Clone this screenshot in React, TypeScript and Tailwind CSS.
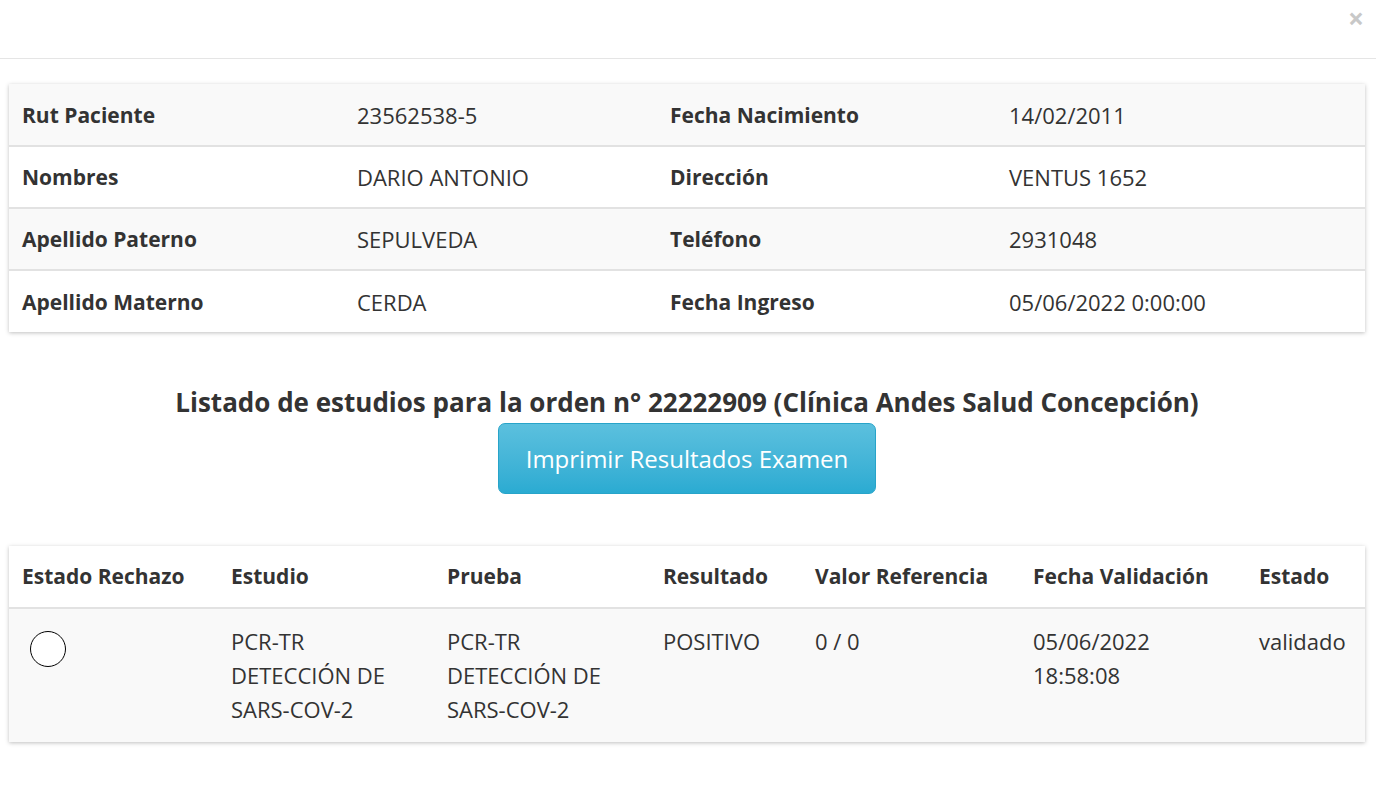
import React from 'react';

const patient: [string, string, string, string][] = [
  ['Rut Paciente', '23562538-5', 'Fecha Nacimiento', '14/02/2011'],
  ['Nombres', 'DARIO ANTONIO', 'Dirección', 'VENTUS 1652'],
  ['Apellido Paterno', 'SEPULVEDA', 'Teléfono', '2931048'],
  ['Apellido Materno', 'CERDA', 'Fecha Ingreso', '05/06/2022 0:00:00'],
];

const headers = ['Estado Rechazo', 'Estudio', 'Prueba', 'Resultado', 'Valor Referencia', 'Fecha Validación', 'Estado'];

export default function App() {
  return (
    <div className="min-h-screen bg-white text-[#333] font-['Open_Sans','Noto_Sans',sans-serif]">
      {/* modal header */}
      <div className="h-[59px] border-b border-[#e5e5e5] flex justify-end items-start pr-[12px] pt-[3px]">
        <button className="text-[28px] leading-[30px] font-bold text-[#c8c8c8]">×</button>
      </div>

      <div className="pl-[9px] pr-[11px] pt-[25px]">
        {/* patient data */}
        <div className="shadow-[0_1px_4px_rgba(0,0,0,0.25)]">
          <table className="w-full table-fixed text-[22px] leading-[30px]">
            <colgroup>
              <col className="w-[336px]" />
              <col className="w-[313px]" />
              <col className="w-[339px]" />
              <col />
            </colgroup>
            <tbody>
              {patient.map((r, i) => (
                <tr key={i} className={`h-[62px] ${i % 2 === 0 ? 'bg-[#f9f9f9]' : 'bg-white'} ${i > 0 ? 'border-t-2 border-[#e2e2e2]' : ''}`}>
                  <td className="pl-[13px] font-bold text-[21px] leading-[30px]">{r[0]}</td>
                  <td className="pl-[12px]">{r[1]}</td>
                  <td className="pl-[12px] font-bold text-[21px] leading-[30px]">{r[2]}</td>
                  <td className="pl-[12px]">{r[3]}</td>
                </tr>
              ))}
            </tbody>
          </table>
        </div>

        <div className="flex flex-col items-center pt-[53px]">
          <h2 className="text-[26px] leading-[34px] font-bold text-[#333]">
            Listado de estudios para la orden n° 22222909 (Clínica Andes Salud Concepción)
          </h2>
          <button className="mt-[4px] w-[378px] h-[71px] rounded-[7px] border border-[#28a4c9] bg-gradient-to-b from-[#5bc0de] to-[#2aabd2] text-white text-[24px]">
            Imprimir Resultados Examen
          </button>
        </div>

        {/* studies */}
        <div className="mt-[52px] shadow-[0_1px_4px_rgba(0,0,0,0.25)]">
          <table className="w-full table-fixed text-[22px]">
            <colgroup>
              <col className="w-[209px]" />
              <col className="w-[216px]" />
              <col className="w-[216px]" />
              <col className="w-[152px]" />
              <col className="w-[218px]" />
              <col className="w-[226px]" />
              <col />
            </colgroup>
            <thead>
              <tr className="h-[62px] bg-white border-b-2 border-[#e2e2e2]">
                {headers.map((h) => (
                  <th key={h} className="pl-[13px] text-left font-bold text-[21px] whitespace-nowrap">
                    {h}
                  </th>
                ))}
              </tr>
            </thead>
            <tbody>
              <tr className="bg-[#f9f9f9] align-top leading-[34px]">
                <td className="pl-[21px] pt-[22px] pb-[16px]">
                  <span className="block w-[36px] h-[36px] rounded-full border border-black bg-white" />
                </td>
                <td className="pl-[13px] pt-[15px] pb-[16px]">PCR-TR<br />DETECCIÓN DE<br />SARS-COV-2</td>
                <td className="pl-[13px] pt-[15px] pb-[16px]">PCR-TR<br />DETECCIÓN DE<br />SARS-COV-2</td>
                <td className="pl-[13px] pt-[15px]">POSITIVO</td>
                <td className="pl-[13px] pt-[15px]">0 / 0</td>
                <td className="pl-[13px] pt-[15px]">05/06/2022<br />18:58:08</td>
                <td className="pl-[13px] pt-[15px]">validado</td>
              </tr>
            </tbody>
          </table>
        </div>
      </div>
    </div>
  );
}
